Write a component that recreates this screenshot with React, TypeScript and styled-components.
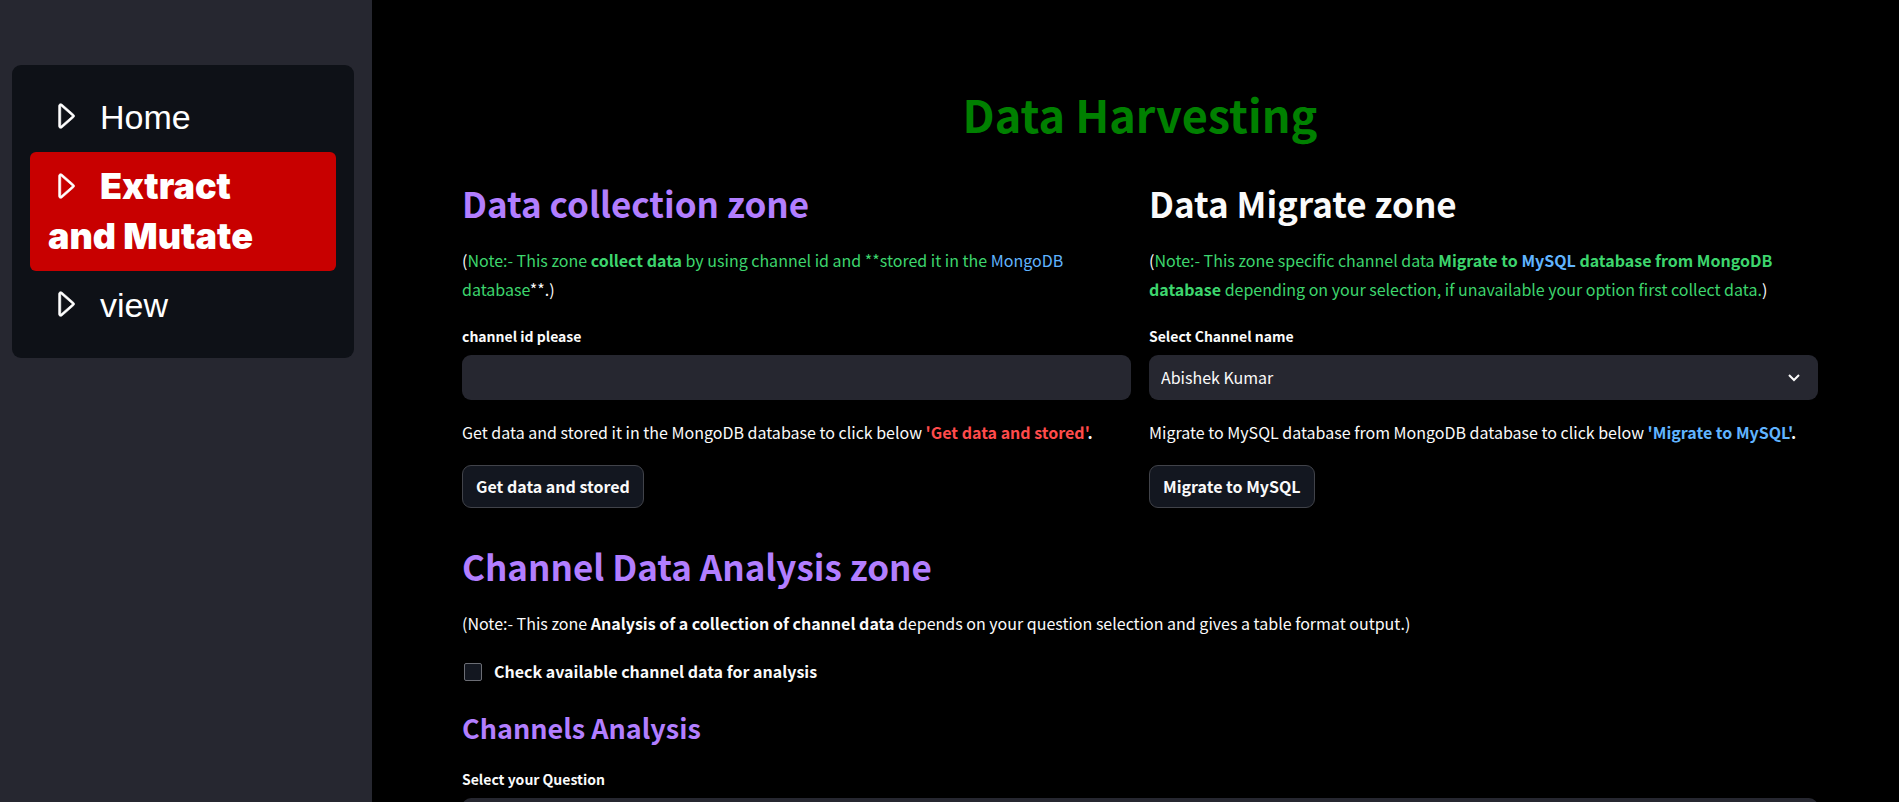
import React from "react";
import styled, { createGlobalStyle } from "styled-components";
import { BsCaretRight } from "react-icons/bs";

const GlobalStyle = createGlobalStyle`
  *, *::before, *::after { box-sizing: border-box; }
  body {
    margin: 0;
    background: #000;
    color: #fafafa;
    font-family: "Source Sans Pro", "Noto Sans CJK SC", sans-serif;
    font-size: 16px;
    line-height: 29px;
  }
`;

const tones = {
  plain: "#fafafa",
  violet: "#b27eff",
  green: "#3dd56d",
  blue: "#60b4ff",
  red: "#ff4b4b",
};
type ToneName = keyof typeof tones;

const Shell = styled.div`
  display: flex;
  height: 100vh;
`;

const Sidebar = styled.aside`
  flex: 0 0 372px;
  padding: 65px 18px 18px 12px;
  background: #262730;
`;

const Menu = styled.nav`
  padding: 18px;
  border-radius: 9px;
  background: #0e1117;
`;

const MenuLink = styled.a<{ $active?: boolean }>`
  display: block;
  padding: 9px 18px 10px;
  border-radius: 6px;
  background: ${(p) => (p.$active ? "#c80000" : "transparent")};
  color: #fff;
  font-family: ${(p) => (p.$active ? '"Arial Black", Inter' : '"Liberation Sans", Arial')}, sans-serif;
  font-size: ${(p) => (p.$active ? 36 : 34)}px;
  font-weight: ${(p) => (p.$active ? 900 : 400)};
  line-height: 50px;
  text-decoration: none;

  svg {
    width: 34px;
    height: 34px;
    margin-right: 18px;
    stroke: currentColor;
    stroke-width: 0.3px;
    vertical-align: -4px;
  }
`;

const Main = styled.main`
  flex: 1;
  min-width: 0;
  padding: 84px 81px 90px 90px;
  overflow-y: auto;
  scrollbar-width: none;
`;

const Title = styled.h1`
  margin: 0 0 34px;
  color: #008000;
  font-size: 45px;
  font-weight: 700;
  line-height: 60px;
  text-align: center;
`;

const Columns = styled.div`
  display: grid;
  grid-template-columns: 1fr 1fr;
  gap: 18px;
`;

const Zone = styled.section`
  display: flex;
  flex-direction: column;
  align-items: flex-start;
  gap: 18px;
`;

const AnalysisZone = styled(Zone)`
  margin-top: 33px;
`;

const ZoneTitle = styled.h2<{ $tone: ToneName }>`
  margin: 0;
  color: ${(p) => tones[p.$tone]};
  font-size: 35px;
  font-weight: 600;
  line-height: 50px;
`;

const SubTitle = styled.h3`
  margin: 5px 0 0;
  color: ${tones.violet};
  font-size: 27px;
  font-weight: 600;
  line-height: 38px;
`;

const Text = styled.p`
  margin: 0;
`;

const Tone = styled.span<{ $tone: ToneName }>`
  color: ${(p) => tones[p.$tone]};
`;

const Field = styled.div`
  display: flex;
  flex-direction: column;
  gap: 8px;
  width: 100%;
  padding-top: 3px;
`;

const FieldLabel = styled.label`
  align-self: flex-start;
  font-size: 14px;
  font-weight: 600;
  line-height: 22px;
`;

const TextBox = styled.input`
  width: 100%;
  height: 45px;
  padding: 0 12px;
  border: 0;
  border-radius: 9px;
  background: #262730;
  color: inherit;
  font: inherit;
`;

const SelectWrap = styled.div`
  position: relative;

  svg {
    position: absolute;
    top: 50%;
    right: 18px;
    transform: translateY(-50%);
    pointer-events: none;
  }
`;

const SelectBox = styled.select`
  display: block;
  width: 100%;
  height: 45px;
  padding: 0 45px 0 12px;
  border: 0;
  border-radius: 9px;
  appearance: none;
  background: #262730;
  color: inherit;
  font: inherit;
`;

const Button = styled.button`
  height: 43px;
  padding: 0 13px;
  border: 1px solid #41434a;
  border-radius: 9px;
  background: #131720;
  color: inherit;
  font: inherit;
  font-weight: 600;
  line-height: 29px;
`;

const CheckRow = styled.label`
  display: flex;
  align-items: center;
  gap: 12px;
  padding: 1px 0 0 2px;
  font-weight: 600;
`;

const CheckBox = styled.input`
  width: 18px;
  height: 18px;
  margin: 0;
  border: 1px solid #6b6d74;
  border-radius: 2px;
  appearance: none;
  background: #131720;

  &:checked {
    background: ${tones.red};
  }
`;

function Dropdown({ id, label, options }: { id: string; label: string; options: string[] }) {
  return (
    <Field>
      <FieldLabel htmlFor={id}>{label}</FieldLabel>
      <SelectWrap>
        <SelectBox id={id}>
          {options.map((o) => (
            <option key={o}>{o}</option>
          ))}
        </SelectBox>
        <svg width="12" height="9" viewBox="0 0 12 9" fill="none" stroke="#fafafa" strokeWidth="2" aria-hidden="true">
          <path d="M1 1.5 6 6.5 11 1.5" />
        </svg>
      </SelectWrap>
    </Field>
  );
}

const pages = [
  { name: "Home" },
  { name: "Extract and\u00a0Mutate", active: true },
  { name: "view" },
];

export default function App() {
  return (
    <>
      <GlobalStyle />
      <Shell>
        <Sidebar>
          <Menu>
            {pages.map((page) => (
              <MenuLink key={page.name} href="#" $active={page.active}>
                <BsCaretRight aria-hidden="true" />
                {page.name}
              </MenuLink>
            ))}
          </Menu>
        </Sidebar>
        <Main>
          <Title>Data Harvesting</Title>
          <Columns>
            <Zone>
              <ZoneTitle $tone="violet">Data collection zone</ZoneTitle>
              <Text>
                (
                <Tone $tone="green">
                  Note:- This zone <strong>collect data</strong> by using channel id and **stored it in the{" "}
                  <Tone $tone="blue">MongoDB</Tone> database
                </Tone>
                **.)
              </Text>
              <Field>
                <FieldLabel htmlFor="channel-id">channel id please</FieldLabel>
                <TextBox id="channel-id" type="text" />
              </Field>
              <Text>
                Get data and stored it in the MongoDB database to click below{" "}
                <strong>
                  <Tone $tone="red">'Get data and stored'</Tone>.
                </strong>
              </Text>
              <Button type="button">Get data and stored</Button>
            </Zone>
            <Zone>
              <ZoneTitle $tone="plain">Data Migrate zone</ZoneTitle>
              <Text>
                (
                <Tone $tone="green">
                  Note:- This zone specific channel data{" "}
                  <strong>
                    Migrate to <Tone $tone="blue">MySQL</Tone> database from MongoDB database
                  </strong>{" "}
                  depending on your selection, if unavailable your option first collect data.
                </Tone>
                )
              </Text>
              <Dropdown id="channel-name" label="Select Channel name" options={["Abishek Kumar"]} />
              <Text>
                Migrate to MySQL database from MongoDB database to click below{" "}
                <strong>
                  <Tone $tone="blue">'Migrate to MySQL'</Tone>.
                </strong>
              </Text>
              <Button type="button">Migrate to MySQL</Button>
            </Zone>
          </Columns>
          <AnalysisZone>
            <ZoneTitle $tone="violet">Channel Data Analysis zone</ZoneTitle>
            <Text>
              (Note:- This zone <strong>Analysis of a collection of channel data</strong> depends on your question
              selection and gives a table format output.)
            </Text>
            <CheckRow>
              <CheckBox type="checkbox" />
              Check available channel data for analysis
            </CheckRow>
            <SubTitle>Channels Analysis</SubTitle>
            <Dropdown id="question" label="Select your Question" options={[""]} />
          </AnalysisZone>
        </Main>
      </Shell>
    </>
  );
}
